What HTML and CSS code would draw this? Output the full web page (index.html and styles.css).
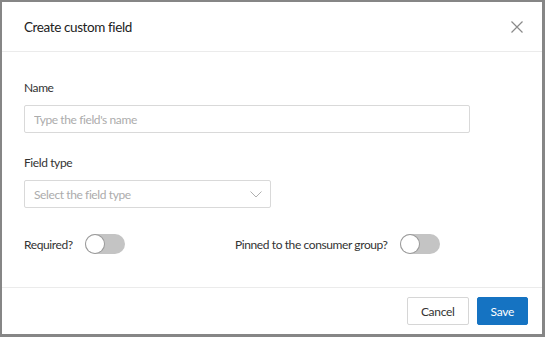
FILE: index.html
```html
<!DOCTYPE html>
<html lang="en">
<head>
  <meta charset="UTF-8">
  <title>Create custom field</title>
  <link rel="stylesheet" href="styles.css">
</head>
<body>
  <div class="modal">
    <div class="modal-header">
      <h2 class="modal-title">Create custom field</h2>
      <button class="close" aria-label="Close">
        <svg width="12" height="12" viewBox="0 0 12 12">
          <path d="M0.5 0.5 L11.5 11.5 M11.5 0.5 L0.5 11.5" stroke="#8a8a8a" stroke-width="1.2" fill="none"/>
        </svg>
      </button>
    </div>
    <div class="modal-body">
      <label class="label">Name</label>
      <input class="input" type="text" placeholder="Type the field's name">

      <label class="label">Field type</label>
      <div class="select">
        <span class="placeholder">Select the field type</span>
        <svg width="12" height="7" viewBox="0 0 12 7">
          <path d="M0.5 0.5 L6 6 L11.5 0.5" stroke="#b0b0b0" stroke-width="1" fill="none"/>
        </svg>
      </div>

      <div class="toggles">
        <div class="toggle-row first">
          <span>Required?</span>
          <span class="switch"><span class="knob"></span></span>
        </div>
        <div class="toggle-row">
          <span>Pinned to the consumer group?</span>
          <span class="switch"><span class="knob"></span></span>
        </div>
      </div>
    </div>
    <div class="modal-footer">
      <button class="btn">Cancel</button>
      <button class="btn btn-primary">Save</button>
    </div>
  </div>
</body>
</html>
```

FILE: styles.css
```css
body {
  margin: 0;
  padding: 2px 3px 3px 2px;
  background: #868686;
  font-family: Lato, 'Noto Sans', sans-serif;
  color: #333;
}

.modal {
  background: #fff;
  height: 332px;
  display: flex;
  flex-direction: column;
}

.modal-header {
  height: 49px;
  border-bottom: 1px solid #ebebeb;
  display: flex;
  align-items: center;
  justify-content: space-between;
  padding: 0 19px 0 22px;
}

.modal-title {
  margin: 0;
  font-size: 13.5px;
  font-weight: 400;
  letter-spacing: -0.4px;
  color: #222;
}

.close {
  border: none;
  background: none;
  padding: 0;
  display: flex;
  cursor: pointer;
}

.modal-body {
  flex: 1;
  padding: 28px 22px 0 22px;
  display: flex;
  flex-direction: column;
  align-items: flex-start;
  font-size: 12px;
  letter-spacing: -0.4px;
}

.label {
  line-height: 16px;
  margin-bottom: 9px;
}

.input {
  box-sizing: border-box;
  width: 446px;
  height: 28px;
  border: 1px solid #d9d9d9;
  border-radius: 2px;
  padding: 0 9px;
  font-family: inherit;
  font-size: 12px;
  letter-spacing: -0.4px;
  margin: 0 0 22px 0;
  outline: none;
}

.input::placeholder,
.placeholder {
  color: #acacac;
}

.select {
  box-sizing: border-box;
  width: 247px;
  height: 28px;
  border: 1px solid #d9d9d9;
  border-radius: 2px;
  padding: 0 8px 0 9px;
  display: flex;
  align-items: center;
  justify-content: space-between;
}

.toggles {
  display: flex;
  margin-top: 26px;
}

.toggle-row {
  display: flex;
  align-items: center;
  gap: 12px;
  white-space: nowrap;
}

.toggle-row.first {
  width: 211px;
}

.switch {
  width: 40px;
  height: 20px;
  border-radius: 10px;
  background: #c4c4c4;
  display: flex;
  align-items: center;
  padding: 0 1px;
  box-sizing: border-box;
}

.knob {
  width: 18px;
  height: 18px;
  border-radius: 50%;
  background: #fff;
  box-shadow: 0 0 0 1px #9a9a9a;
  box-sizing: border-box;
}

.modal-footer {
  height: 46px;
  border-top: 1px solid #ebebeb;
  display: flex;
  align-items: center;
  justify-content: flex-end;
  gap: 8px;
  padding: 0 14px;
}

.btn {
  height: 28px;
  padding: 0 13px;
  border: 1px solid #d6d6d6;
  border-radius: 2px;
  background: #fff;
  font-family: inherit;
  font-size: 12px;
  letter-spacing: -0.3px;
  color: #333;
  cursor: pointer;
}

.btn-primary {
  background: #1573c2;
  border-color: #1573c2;
  color: #fff;
}
```
